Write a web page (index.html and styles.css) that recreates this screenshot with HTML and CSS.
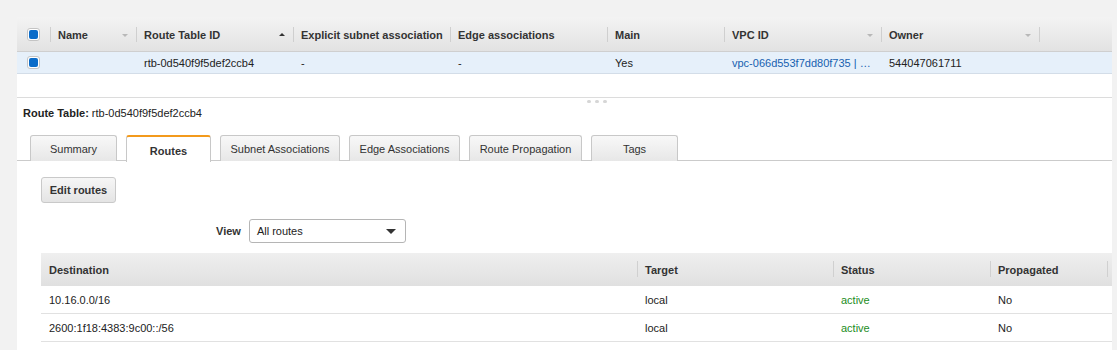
FILE: index.html
```html
<!DOCTYPE html>
<html>
<head>
<meta charset="utf-8">
<link rel="stylesheet" href="styles.css">
</head>
<body>
<div class="page">
  <div class="grid">
    <div class="grid-head">
      <div class="gcell c-chk"><span class="chk"><span></span></span></div>
      <div class="gcell c-name sep">Name<i class="tri down light"></i></div>
      <div class="gcell c-id sep">Route Table ID<i class="tri up"></i></div>
      <div class="gcell c-exp sep">Explicit subnet association</div>
      <div class="gcell c-edge sep">Edge associations</div>
      <div class="gcell c-main sep">Main</div>
      <div class="gcell c-vpc sep">VPC ID<i class="tri down light"></i></div>
      <div class="gcell c-own sep">Owner<i class="tri down light"></i></div>
      <div class="gcell c-fill sep"></div>
    </div>
    <div class="grid-row">
      <div class="gcell c-chk"><span class="chk"><span></span></span></div>
      <div class="gcell c-name"></div>
      <div class="gcell c-id">rtb-0d540f9f5def2ccb4</div>
      <div class="gcell c-exp">-</div>
      <div class="gcell c-edge">-</div>
      <div class="gcell c-main">Yes</div>
      <div class="gcell c-vpc link">vpc-066d553f7dd80f735 | …</div>
      <div class="gcell c-own">544047061711</div>
      <div class="gcell c-fill"></div>
    </div>
  </div>

  <div class="detail">
    <div class="handle"><i></i><i></i><i></i></div>
    <div class="title"><b>Route Table:</b> rtb-0d540f9f5def2ccb4</div>
    <div class="tabs">
      <div class="tab t-sum">Summary</div>
      <div class="tab t-routes active">Routes</div>
      <div class="tab t-sub">Subnet Associations</div>
      <div class="tab t-edge">Edge Associations</div>
      <div class="tab t-prop">Route Propagation</div>
      <div class="tab t-tags">Tags</div>
    </div>
    <div class="content">
      <button class="btn">Edit routes</button>
      <div class="view-row">
        <span class="view-label">View</span>
        <div class="select">All routes<i class="caret"></i></div>
      </div>
      <div class="rtable">
        <div class="rhead">
          <div class="rcell r-dest">Destination</div>
          <div class="rcell r-target sep">Target</div>
          <div class="rcell r-status sep">Status</div>
          <div class="rcell r-prop sep">Propagated</div>
          <div class="rcell r-fill sep"></div>
        </div>
        <div class="rrow">
          <div class="rcell r-dest">10.16.0.0/16</div>
          <div class="rcell r-target">local</div>
          <div class="rcell r-status active-txt">active</div>
          <div class="rcell r-prop">No</div>
          <div class="rcell r-fill"></div>
        </div>
        <div class="rrow">
          <div class="rcell r-dest">2600:1f18:4383:9c00::/56</div>
          <div class="rcell r-target">local</div>
          <div class="rcell r-status active-txt">active</div>
          <div class="rcell r-prop">No</div>
          <div class="rcell r-fill"></div>
        </div>
      </div>
    </div>
  </div>
</div>
</body>
</html>
```

FILE: styles.css
```css
* { box-sizing: border-box; }
html, body { margin: 0; padding: 0; }
body {
  background: #f2f2f2;
  font-family: "Liberation Sans", Arial, Helvetica, sans-serif;
  font-size: 11px;
  color: #222;
  width: 1117px;
  height: 350px;
  overflow: hidden;
}
.page {
  padding: 17px 0 0 17px;
  width: 1112px;
}

/* top grid */
.grid {
  background: #fff;
  height: 81px;
  border-bottom: 1px solid #dcdcdc;
}
.grid-head {
  display: flex;
  height: 35px;
  background: linear-gradient(#f3f3f3, #e2e2e2);
  border-bottom: 1px solid #cfcfcf;
  font-weight: bold;
  color: #333;
  padding-top: 1px;
}
.grid-row {
  display: flex;
  height: 22px;
  background: #e6f0fa;
  border-bottom: 1px solid #d3dde8;
}
.gcell {
  position: relative;
  display: flex;
  align-items: center;
  padding-left: 8px;
  white-space: nowrap;
  overflow: hidden;
}
.grid-head .sep::before {
  content: "";
  position: absolute;
  left: 0;
  top: 9px;
  height: 15px;
  border-left: 1px solid #cfcfcf;
}
.c-chk { width: 33px; padding-left: 10px; }
.c-name { width: 86px; }
.c-id { width: 157px; }
.c-exp { width: 157px; }
.c-edge { width: 157px; }
.c-main { width: 117px; }
.c-vpc { width: 157px; }
.c-own { width: 158px; }
.c-fill { flex: 1; }
.link { color: #1760b0; }

.chk {
  display: inline-flex;
  width: 13px;
  height: 13px;
  border: 1px solid #c4c4c4;
  border-radius: 3px;
  background: #fff;
  padding: 1px;
}
.chk span {
  flex: 1;
  background: #0b6cc9;
  border-radius: 2px;
}

.tri {
  position: absolute;
  right: 8px;
  top: 50%;
  width: 0;
  height: 0;
  border-left: 3px solid transparent;
  border-right: 3px solid transparent;
}
.tri.down { border-top: 3px solid #888; margin-top: -1px; }
.tri.up { border-bottom: 3px solid #333; margin-top: -2px; }
.tri.light { border-top-color: #b8b8b8; }

/* detail panel */
.detail {
  position: relative;
  background: #fff;
  height: 260px;
  padding-top: 8px;
}
.handle {
  position: absolute;
  left: 570px;
  top: 2px;
  display: flex;
  gap: 4px;
}
.handle i {
  width: 4px;
  height: 3px;
  border-radius: 2px;
  background: #d6d6d6;
}
.title {
  padding-left: 6px;
  height: 14px;
  line-height: 14px;
  color: #222;
}
.title b { color: #222; }

.tabs {
  display: flex;
  gap: 9px;
  margin-top: 15px;
  padding-left: 13px;
  height: 26px;
  border-bottom: 1px solid #cbcbcb;
}
.tab {
  height: 26px;
  border: 1px solid #c8c8c8;
  border-bottom: none;
  border-radius: 3px 3px 0 0;
  background: linear-gradient(#f8f8f8, #e7e7e7);
  display: flex;
  align-items: center;
  justify-content: center;
  color: #333;
}
.tab.active {
  background: #fff;
  border-top: 2px solid #f39a1c;
  font-weight: bold;
  height: 27px;
  padding-top: 2px;
}
.t-sum { width: 87px; }
.t-routes { width: 85px; }
.t-sub { width: 120px; }
.t-edge { width: 111px; }
.t-prop { width: 113px; }
.t-tags { width: 87px; }

.content {
  padding: 16px 0 0 24px;
}
.btn {
  display: block;
  height: 26px;
  width: 75px;
  border: 1px solid #c9c9c9;
  border-radius: 3px;
  background: linear-gradient(#f6f6f6, #e4e4e4);
  font-family: inherit;
  font-size: 11px;
  font-weight: bold;
  color: #333;
  padding: 0;
}
.view-row {
  display: flex;
  align-items: center;
  gap: 8px;
  margin-top: 16px;
  padding-left: 175px;
}
.view-label { font-weight: bold; color: #333; }
.select {
  position: relative;
  width: 157px;
  height: 24px;
  border: 1px solid #b5b5b5;
  border-radius: 3px;
  background: #fff;
  display: flex;
  align-items: center;
  padding-left: 7px;
  color: #222;
}
.caret {
  position: absolute;
  right: 9px;
  top: 9px;
  width: 0;
  height: 0;
  border-left: 5px solid transparent;
  border-right: 5px solid transparent;
  border-top: 5px solid #333;
}

.rtable {
  margin-top: 10px;
  width: 1071px;
}
.rhead {
  display: flex;
  height: 33px;
  background: linear-gradient(#efefef, #e0e0e0);
  font-weight: bold;
  color: #333;
}
.rrow {
  display: flex;
  height: 28px;
  border-bottom: 1px solid #e1e1e1;
}
.rcell {
  position: relative;
  display: flex;
  align-items: center;
  padding-left: 8px;
  white-space: nowrap;
  flex-shrink: 0;
}
.rhead .sep::before {
  content: "";
  position: absolute;
  left: 0;
  top: 8px;
  height: 16px;
  border-left: 1px solid #d0d0d0;
}
.r-dest { width: 596px; }
.r-target { width: 196px; }
.r-status { width: 157px; }
.r-prop { width: 117px; }
.r-fill { flex: 1 1 auto; }
.active-txt { color: #1d8d1d; }
```
